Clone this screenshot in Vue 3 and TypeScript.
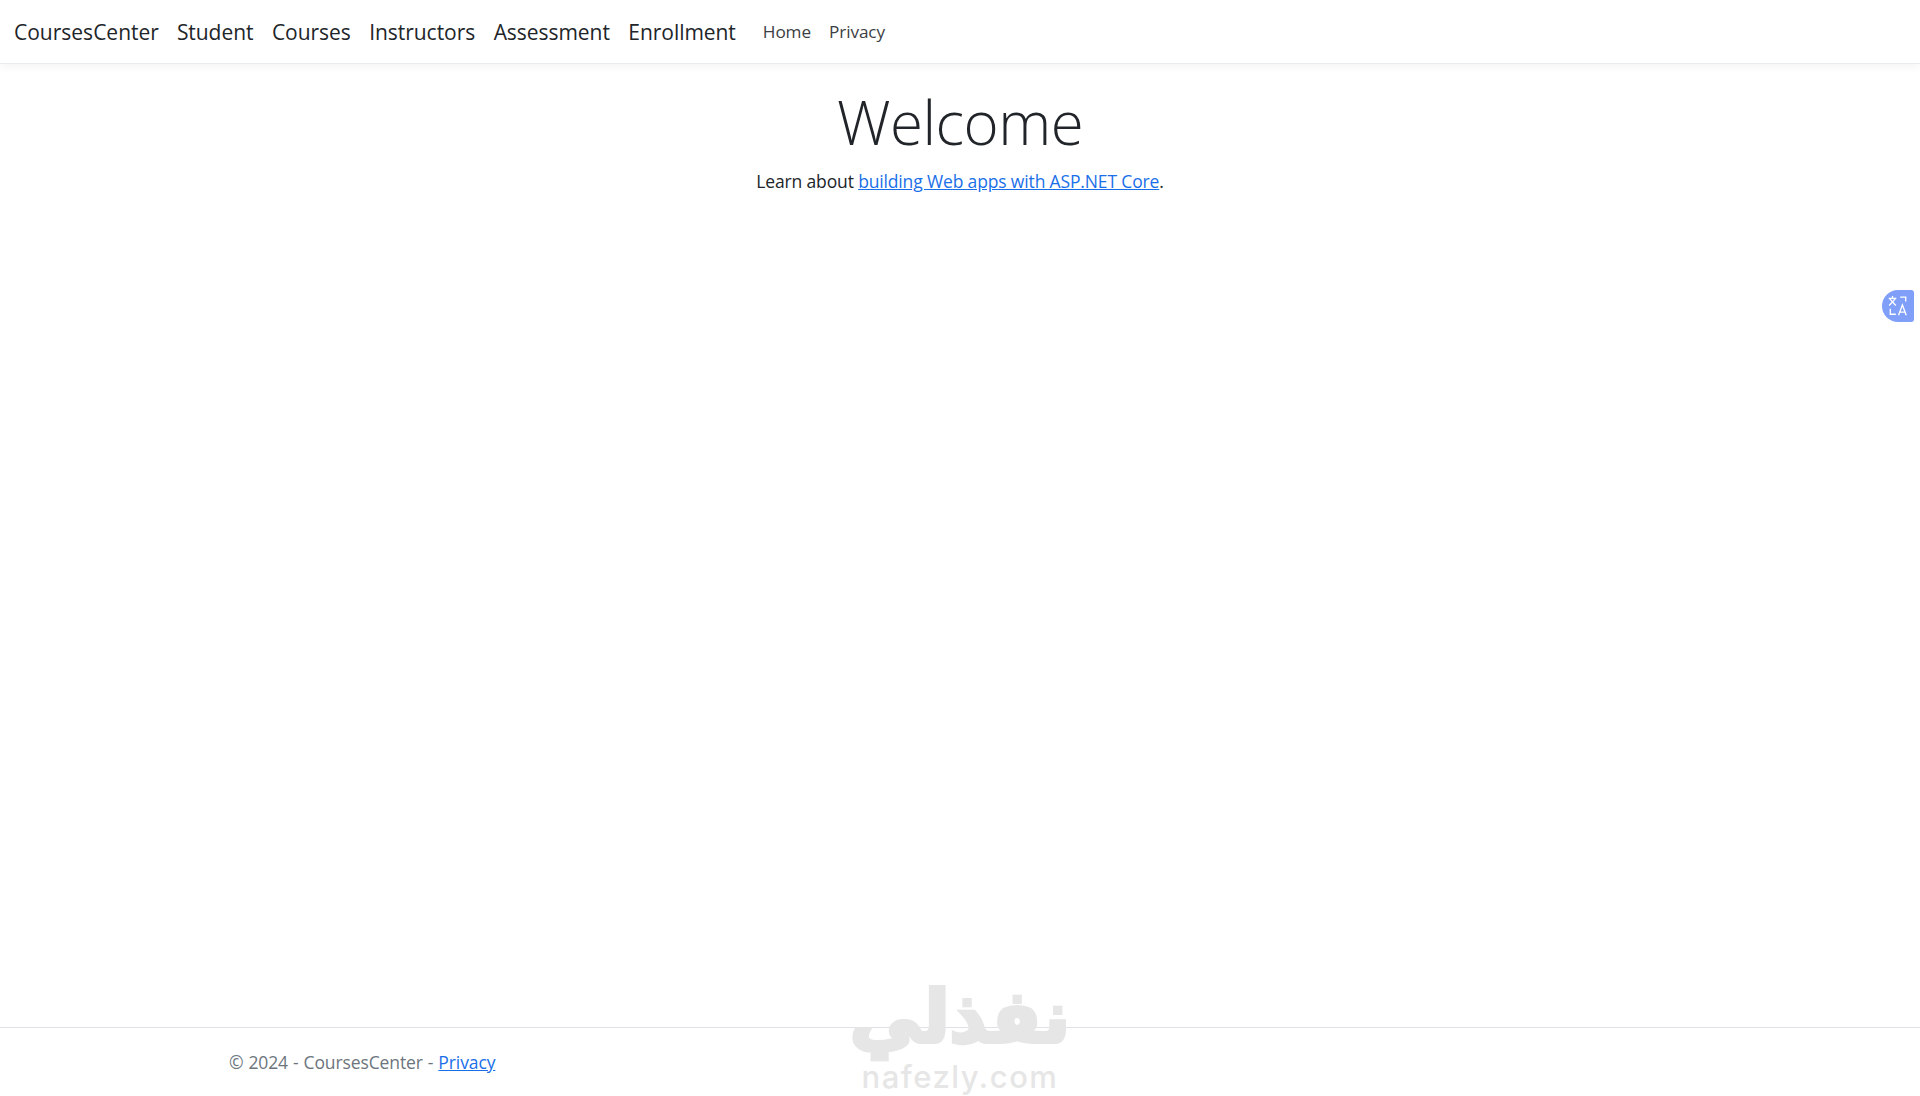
<template>
  <div class="page">
    <!-- top navigation -->
    <header class="navbar">
      <a class="brand" href="#">CoursesCenter</a>
      <nav class="big-links">
        <a v-for="item in bigLinks" :key="item" href="#">{{ item }}</a>
      </nav>
      <nav class="small-links">
        <a v-for="item in smallLinks" :key="item" href="#">{{ item }}</a>
      </nav>
    </header>

    <main class="content">
      <h1>Welcome</h1>
      <p>Learn about <a href="#">building Web apps with ASP.NET Core</a>.</p>
    </main>

    <footer class="footer">
      <span>© 2024 - CoursesCenter - <a href="#">Privacy</a></span>
    </footer>

    <!-- translate widget -->
    <div class="translate">
      <svg width="22" height="22" viewBox="0 0 20 20" fill="none" stroke="#fff" stroke-width="1.2">
        <path d="M1.500 3h7M5 1v2M2.500 3.500l5.500 6M7.500 3.500l-5.500 6M12 2h5v4M3 12.500v5h5" />
        <path d="M10.500 18.500l3.500-9.500 3.500 9.500M11.700 15.500h4.600" />
      </svg>
    </div>

    <!-- watermark -->
    <div class="watermark">
      <div class="wm-ar" lang="ar" dir="rtl">نفذلي</div>
      <div class="wm-en">nafezly.com</div>
    </div>
  </div>
</template>

<script setup lang="ts">
const bigLinks: string[] = ["Student", "Courses", "Instructors", "Assessment", "Enrollment"];
const smallLinks: string[] = ["Home", "Privacy"];
</script>

<style>
html,
body {
  margin: 0;
  background: #fff;
}
</style>

<style scoped>
.page {
  position: relative;
  display: flex;
  flex-direction: column;
  height: 1096px;
  overflow: hidden;
  font-family: "Open Sans", "Noto Sans", sans-serif;
  color: #212529;
}

.navbar {
  display: flex;
  align-items: center;
  height: 64px;
  padding-left: 14px;
  box-sizing: border-box;
  border-bottom: 1px solid #e9ecef;
  box-shadow: 0 4px 8px rgba(0, 0, 0, 0.04);
}

.navbar a {
  color: #212529;
  text-decoration: none;
}

.brand {
  font-size: 21px;
  margin-right: 18px;
  padding-top: 1px;
}

.big-links {
  display: flex;
  gap: 18.500px;
  font-size: 21px;
  letter-spacing: -0.05px;
  padding-top: 1px;
}

.small-links {
  display: flex;
  gap: 18px;
  margin-left: 27px;
  padding-bottom: 1px;
  font-size: 17.200px;
  letter-spacing: -0.1px;
}

.small-links a {
  color: #3c4043;
}

.content {
  flex: 1;
  text-align: center;
}

.content h1 {
  margin: 19px 0 0;
  font-size: 60px;
  font-weight: 300;
  line-height: 78px;
  letter-spacing: -0.5px;
}

.content p {
  margin: 7px 0 0;
  font-size: 17.500px;
  line-height: 26px;
  letter-spacing: -0.15px;
}

.content p a,
.footer a {
  color: #1a6fe8;
}

.footer {
  height: 69px;
  box-sizing: border-box;
  padding-left: 229px;
  border-top: 1px solid #dee2e6;
  display: flex;
  align-items: center;
  font-size: 17.500px;
  letter-spacing: -0.1px;
  word-spacing: 0.5px;
  color: #6c757d;
}

.translate {
  position: absolute;
  top: 290px;
  right: 6px;
  width: 32px;
  height: 32px;
  border-radius: 16px 3px 3px 16px;
  background: #7f9ff8;
  display: flex;
  align-items: center;
  justify-content: center;
}

.watermark {
  position: absolute;
  left: 850px;
  top: 977px;
  width: 220px;
  text-align: center;
  color: #e6e6e6;
  pointer-events: none;
}

.wm-ar {
  font-family: "DejaVu Sans", sans-serif;
  font-weight: 700;
  font-size: 72px;
  line-height: 80px;
  -webkit-text-stroke: 4px #e6e6e6;
}

.wm-en {
  font-family: "Inter", sans-serif;
  font-weight: 500;
  font-size: 31px;
  line-height: 36px;
  letter-spacing: 1.500px;
  margin-top: 2px;
}
</style>
